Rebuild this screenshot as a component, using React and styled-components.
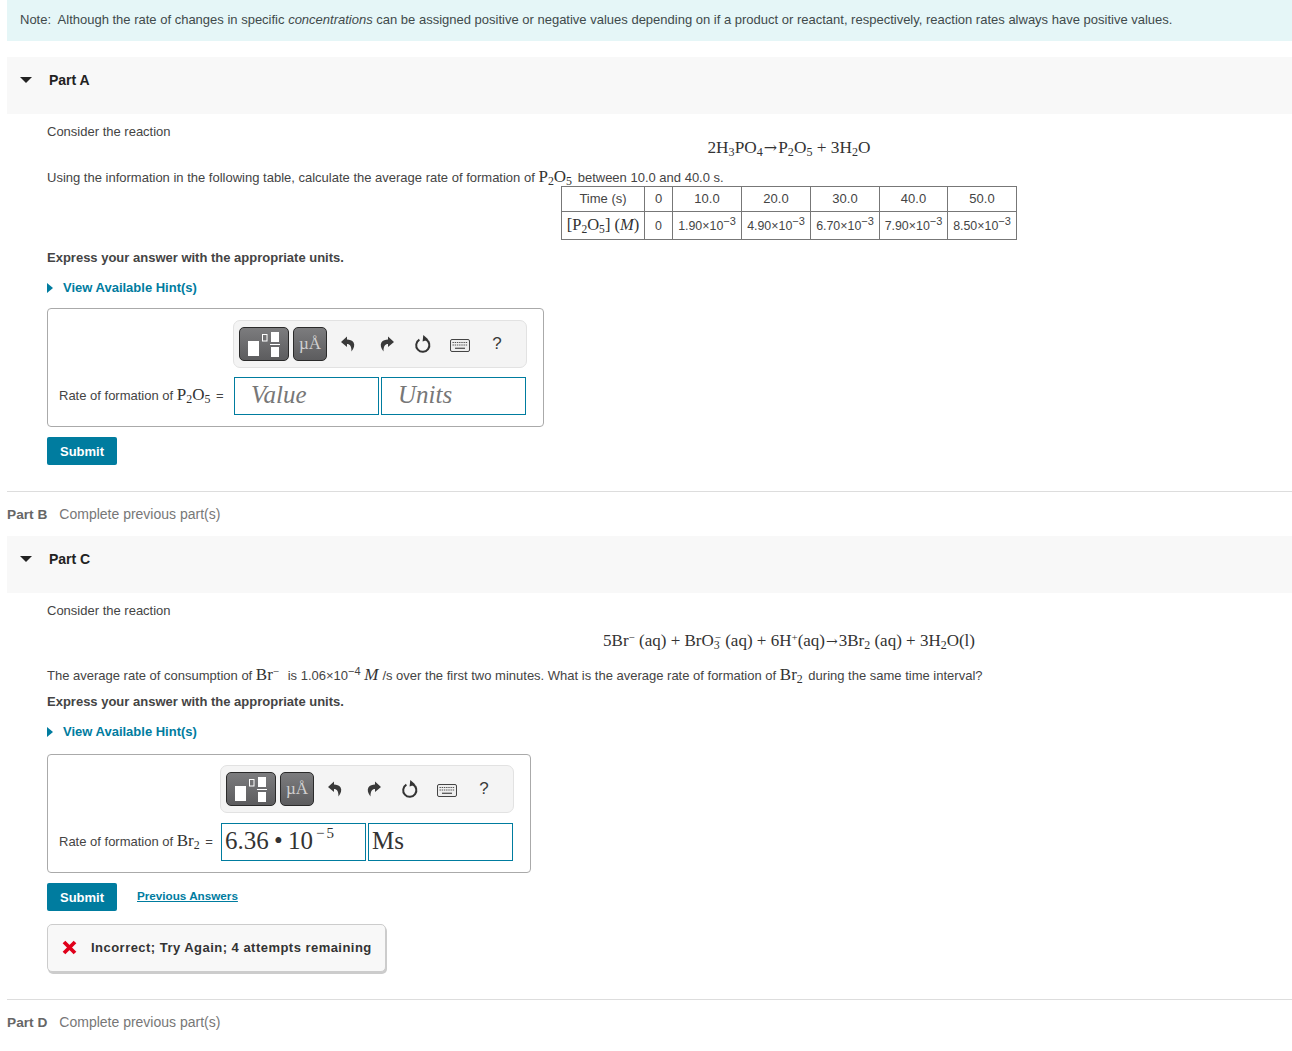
import React from "react";
import styled, { createGlobalStyle } from "styled-components";

const Global = createGlobalStyle`
  html, body { margin: 0; padding: 0; background: #fff; }
  body { font-family: "Liberation Sans", Arial, sans-serif; font-size: 13px; color: #444; }
`;
const Page = styled.div`
  padding-left: 7px;
  height: 1051px;
  overflow: hidden;
  box-sizing: border-box;
`;
const Note = styled.div`
  height: 41px;
  background: #e5f6f7;
  padding-left: 13px;
  display: flex;
  align-items: center;
  padding-bottom: 3px;
  box-sizing: border-box;
  white-space: pre;
  color: #3f4a4b;
  em { font-style: italic; }
`;
const PartHeader = styled.div`
  height: 57px;
  margin-top: ${p => p.$mt || 0}px;
  background: #f8f8f8;
  display: flex;
  align-items: center;
  padding-bottom: 12px;
  box-sizing: border-box;
  padding-left: 13px;
  font-weight: bold;
  color: #222;
  font-size: 14px;
`;
const Caret = styled.span`
  width: 0;
  height: 0;
  border-left: 6px solid transparent;
  border-right: 6px solid transparent;
  border-top: 6px solid #222;
  margin-right: 17px;
`;
const Body = styled.div`
  padding-left: 40px;
`;
const Line = styled.div`
  height: 16px;
  line-height: 16px;
  margin-top: ${p => p.$mt || 0}px;
  white-space: nowrap;
`;
const Strong = styled(Line)`
  font-weight: bold;
  color: #444;
`;
const Centered = styled.div`
  margin-left: 239px;
  margin-top: ${p => p.$mt || 0}px;
  display: flex;
  justify-content: center;
  font-family: "Liberation Serif", serif;
  font-size: ${p => p.$fs || 17}px;
  line-height: 18px;
  color: #333;
  white-space: nowrap;
`;
const Math = styled.span`
  font-family: "Liberation Serif", serif;
  font-size: ${p => p.$s || 17}px;
  color: #333;
  margin-right: ${p => p.$gap || 0}px;
`;
const Arrow = styled.span`
  font-family: "DejaVu Serif", serif;
  font-size: ${p => p.$s || 14}px;
  margin: 0 1px;
`;
const Sub = styled.sub`
  font-size: 70%;
  line-height: 0;
  vertical-align: -0.25em;
`;
const Sup = styled.sup`
  font-size: ${p => p.$s || 11}px;
  line-height: 0;
  vertical-align: 0.45em;
  margin-left: ${p => p.$back || 0}px;
`;
const Table = styled.table`
  border-collapse: collapse;
  table-layout: fixed;
  width: 455px;
  font-family: "Liberation Sans", sans-serif;
  font-size: 12.4px;
  color: #444;
`;
const Cell = styled.td`
  border: 1px solid #777;
  width: ${p => p.$w}px;
  height: ${p => p.$h}px;
  padding: 0;
  text-align: center;
  box-sizing: border-box;
  white-space: nowrap;
  font-size: ${p => p.$fs || 12.4}px;
`;
const Hint = styled.div`
  height: 16px;
  line-height: 16px;
  margin-top: ${p => p.$mt}px;
  display: flex;
  align-items: center;
  font-weight: bold;
  color: #007c9f;
`;
const HintCaret = styled.span`
  width: 0;
  height: 0;
  border-top: 5px solid transparent;
  border-bottom: 5px solid transparent;
  border-left: 6px solid #007c9f;
  margin-right: 10px;
`;
const AnswerBox = styled.div`
  width: ${p => p.$w}px;
  height: 119px;
  margin-top: ${p => p.$mt}px;
  box-sizing: border-box;
  border: 1px solid #aaa;
  border-radius: 4px;
  padding: ${p => p.$pt}px 17px 0 11px;
  display: flex;
  flex-direction: column;
  align-items: flex-end;
`;
const Toolbar = styled.div`
  width: 294px;
  height: 48px;
  margin-right: -1px;
  box-sizing: border-box;
  background: #f4f4f4;
  border: 1px solid #e2e2e2;
  border-radius: 7px;
  display: flex;
  align-items: center;
  padding-left: 5px;
`;
const DarkButton = styled.div`
  width: ${p => p.$w}px;
  height: 34px;
  margin-right: 4px;
  box-sizing: border-box;
  border: 1px solid #2a2a2a;
  border-radius: 5px;
  background: linear-gradient(#7c7c7e, #5c5c5e);
  display: flex;
  align-items: center;
  justify-content: center;
  color: #d0d0d0;
  font-family: "Liberation Serif", serif;
  font-size: 17px;
`;
const ToolIcon = styled.div`
  width: ${p => p.$w}px;
  padding-top: ${p => p.$pt || 0}px;
  display: flex;
  justify-content: center;
  color: #3a3a3a;
  font-size: 17px;
`;
const InputRow = styled.div`
  display: flex;
  align-items: center;
  gap: 2px;
  margin-top: ${p => p.$mt}px;
  width: 100%;
`;
const Label = styled.div`
  flex: 1;
  white-space: nowrap;
  padding-bottom: 2px;
`;
const Field = styled.div`
  width: 145px;
  height: 38px;
  box-sizing: border-box;
  border: 1px solid #007c9f;
  padding: 0 0 2px ${p => p.$pl}px;
  display: flex;
  align-items: center;
  font-family: "Liberation Serif", serif;
  font-size: 25px;
  word-spacing: ${p => (p.$ph ? 0 : -1)}px;
  font-style: ${p => (p.$ph ? "italic" : "normal")};
  color: ${p => (p.$ph ? "#777" : "#333")};
  white-space: pre;
`;
const Power = styled.sup`
  font-size: 15px;
  line-height: 0;
  vertical-align: 0.75em;
  margin-left: 3px;
  letter-spacing: 2px;
`;
const SubmitRow = styled.div`
  display: flex;
  align-items: center;
  margin-top: 10px;
`;
const Submit = styled.button`
  width: 70px;
  height: 28px;
  background: #007c9f;
  color: #fff;
  border: none;
  border-radius: 2px;
  padding: 0;
  font-family: "Liberation Sans", sans-serif;
  font-size: 13px;
  font-weight: bold;
`;
const PrevLink = styled.a`
  margin-left: 20px;
  padding-bottom: 4px;
  color: #007c9f;
  font-weight: bold;
  font-size: 11.7px;
  text-decoration: underline;
`;
const Feedback = styled.div`
  width: 339px;
  height: 48px;
  margin-top: 13px;
  box-sizing: border-box;
  background: #f8f8f8;
  border: 1px solid #ccc;
  border-radius: 5px;
  box-shadow: 1px 2px 0 #ccc;
  display: flex;
  align-items: center;
  padding: 0 0 1px 14px;
  font-weight: bold;
  font-size: 13px;
  letter-spacing: 0.47px;
  color: #333;
`;
const Divider = styled.div`
  border-top: 1px solid #ddd;
  margin-top: ${p => p.$mt}px;
`;
const LockedPart = styled.div`
  height: 44px;
  display: flex;
  align-items: center;
  font-size: 14px;
  color: #777;
  b { color: #666; font-size: 13.7px; margin-right: 12px; }
`;

const Template = () => (
  <svg width="34" height="26" viewBox="0 0 34 26">
    <rect x="1" y="10" width="11" height="15" fill="#fff" />
    <rect x="15.5" y="3.5" width="4.5" height="6.5" fill="none" stroke="#fff" strokeWidth="1" />
    <rect x="24" y="1" width="8" height="10" fill="#fff" />
    <rect x="23" y="13" width="10" height="1" fill="#fff" />
    <rect x="24" y="16" width="8" height="10" fill="#fff" />
  </svg>
);
const Undo = ({ flip }) => (
  <svg width="14" height="16" viewBox="0 0 14 16" style={flip ? { transform: "scaleX(-1)" } : undefined}>
    <path d="M6 0.5 L0 6 L6 11 V8 C9 8 10.5 10 10.5 15.5 C13 12.5 14 9 12.6 6.6 C11.2 4.4 8.5 3.6 6 3.6 Z" fill="#3a3a3a" />
  </svg>
);
const Reset = () => (
  <svg width="18" height="20" viewBox="0 0 18 20">
    <path d="M11.6 5.3 A6.6 6.6 0 1 1 5.4 5.6" fill="none" stroke="#333" strokeWidth="2" />
    <path d="M9.3 1 L14.4 5.6 L8.6 7.6 Z" fill="#333" />
  </svg>
);
const Keys = () => (
  <svg width="20" height="13" viewBox="0 0 20 13">
    <rect x="0.5" y="0.5" width="19" height="12" rx="1.5" fill="#eee" stroke="#444" />
    <path d="M2.5 3.5 H17.5 M2.5 6 H17.5" stroke="#555" strokeWidth="1.2" strokeDasharray="1.4 0.8" />
    <path d="M5 9.3 H15" stroke="#555" strokeWidth="1.3" />
  </svg>
);
const Cross = () => (
  <svg width="15" height="15" viewBox="0 0 15 15" style={{ marginRight: 14 }}>
    <path d="M2 2 L13 13 M13 2 L2 13" stroke="#e0001b" strokeWidth="3.8" />
  </svg>
);

const Tools = () => (
  <Toolbar>
    <DarkButton $w={50}><Template /></DarkButton>
    <DarkButton $w={34}>µÅ</DarkButton>
    <ToolIcon $w={34}><Undo /></ToolIcon>
    <ToolIcon $w={44}><Undo flip /></ToolIcon>
    <ToolIcon $w={27}><Reset /></ToolIcon>
    <ToolIcon $w={48} $pt={2}><Keys /></ToolIcon>
    <ToolIcon $w={26}>?</ToolIcon>
  </Toolbar>
);

const P2O5 = () => <>P<Sub>2</Sub>O<Sub>5</Sub></>;
const Conc = ({ v }) => <>{v}×10<Sup>−3</Sup></>;

const heads = [["Time (s)", 83], ["0", 28], ["10.0", 69], ["20.0", 69], ["30.0", 69], ["40.0", 68], ["50.0", 69]];
const vals = ["0", "1.90", "4.90", "6.70", "7.90", "8.50"];

export default function App() {
  return (
    <Page>
      <Global />
      <Note><span>Note:  Although the rate of changes in specific <em>concentrations</em> can be assigned positive or negative values depending on if a product or reactant, respectively, reaction rates always have positive values.</span></Note>

      <PartHeader $mt={16}><Caret />Part A</PartHeader>
      <Body>
        <Line $mt={10}>Consider the reaction</Line>
        <Centered $mt={-1} $fs={17.3}><span>2H<Sub>3</Sub>PO<Sub>4</Sub><Arrow $s={16}>→</Arrow>P<Sub>2</Sub>O<Sub>5</Sub> + 3H<Sub>2</Sub>O</span></Centered>
        <Line $mt={12}>Using the information in the following table, calculate the average rate of formation of <Math $gap={2}><P2O5 /></Math> between 10.0 and 40.0 s.</Line>
        <Centered $mt={1}>
          <Table>
            <tbody>
              <tr>{heads.map(([t, w]) => <Cell key={t} $w={w} $h={25} $fs={13}>{t}</Cell>)}</tr>
              <tr>
                <Cell $w={83} $h={28}><Math $s={16.5}>[<P2O5 />] (<i>M</i>)</Math></Cell>
                {vals.map((v, i) => <Cell key={v} $w={heads[i + 1][1]} $h={28}>{v === "0" ? "0" : <Conc v={v} />}</Cell>)}
              </tr>
            </tbody>
          </Table>
        </Centered>
        <Strong $mt={10}>Express your answer with the appropriate units.</Strong>
        <Hint $mt={14}><HintCaret />View Available Hint(s)</Hint>
        <AnswerBox $w={497} $mt={12} $pt={11}>
          <Tools />
          <InputRow $mt={9}>
            <Label>Rate of formation of <Math $gap={2}><P2O5 /></Math> =</Label>
            <Field $ph $pl={16}>Value</Field>
            <Field $ph $pl={16}>Units</Field>
          </InputRow>
        </AnswerBox>
        <SubmitRow><Submit>Submit</Submit></SubmitRow>
      </Body>
      <Divider $mt={26} />
      <LockedPart><b>Part B</b>Complete previous part(s)</LockedPart>

      <PartHeader><Caret />Part C</PartHeader>
      <Body>
        <Line $mt={10}>Consider the reaction</Line>
        <Centered $mt={13}><span>5Br<Sup>−</Sup> (aq) + BrO<Sub>3</Sub><Sup $back={-5}>−</Sup> (aq) + 6H<Sup>+</Sup>(aq)<Arrow>→</Arrow>3Br<Sub>2</Sub> (aq) + 3H<Sub>2</Sub>O(l)</span></Centered>
        <Line $mt={17}>The average rate of consumption of <Math $gap={5}>Br<Sup>−</Sup></Math> is 1.06×10<Sup>−4</Sup> <Math $gap={4}><i>M</i></Math>/s over the first two minutes. What is the average rate of formation of <Math $gap={2}>Br<Sub>2</Sub></Math> during the same time interval?</Line>
        <Strong $mt={11}>Express your answer with the appropriate units.</Strong>
        <Hint $mt={14}><HintCaret />View Available Hint(s)</Hint>
        <AnswerBox $w={484} $mt={14} $pt={10}>
          <Tools />
          <InputRow $mt={10}>
            <Label>Rate of formation of <Math $gap={2}>Br<Sub>2</Sub></Math> =</Label>
            <Field $pl={3}><span>6.36 • 10<Power>−5</Power></span></Field>
            <Field $pl={3}>Ms</Field>
          </InputRow>
        </AnswerBox>
        <SubmitRow><Submit>Submit</Submit><PrevLink href="#">Previous Answers</PrevLink></SubmitRow>
        <Feedback><Cross />Incorrect; Try Again; 4 attempts remaining</Feedback>
      </Body>
      <Divider $mt={27} />
      <LockedPart><b>Part D</b>Complete previous part(s)</LockedPart>
    </Page>
  );
}
